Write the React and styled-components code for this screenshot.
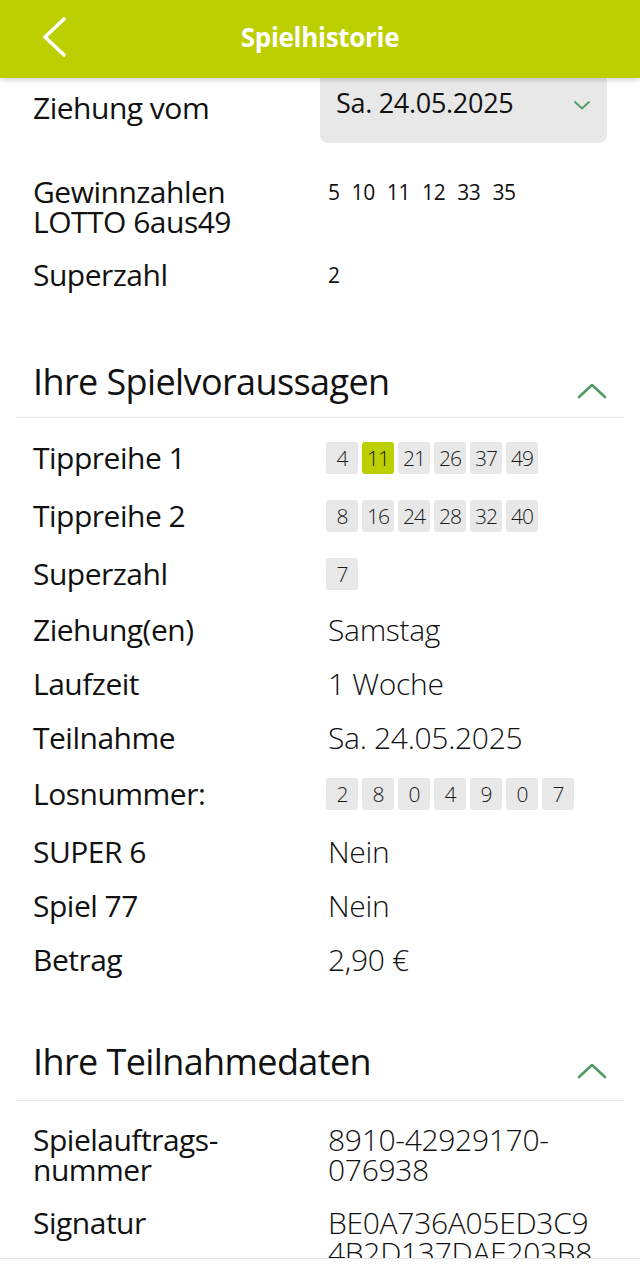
import React from "react";
import styled, { createGlobalStyle } from "styled-components";

const Global = createGlobalStyle`
  html, body { margin: 0; padding: 0; background: #fff; }
  body { font-family: "Open Sans", "Noto Sans", sans-serif; color: #111; }
  * { box-sizing: border-box; }
`;

const GREEN = "#bccf00";
const ICON_GREEN = "#4f9a66";

const Screen = styled.div`
  width: 640px;
  height: 1264px;
  display: flex;
  flex-direction: column;
  overflow: hidden;
  background: #fff;
`;

const Header = styled.header`
  position: relative;
  z-index: 2;
  flex: 0 0 78px;
  height: 78px;
  background: ${GREEN};
  display: grid;
  grid-template-columns: 96px 1fr 96px;
  align-items: center;
  box-shadow: 0 2px 5px rgba(0, 0, 0, 0.18);
`;

const BackButton = styled.button`
  border: 0;
  background: none;
  padding: 0 0 4px 40px;
  height: 78px;
  display: flex;
  align-items: center;
  cursor: pointer;
`;

const Title = styled.h1`
  margin: 0 0 4px;
  text-align: center;
  color: #fff;
  font-size: 26px;
  font-weight: 700;
  letter-spacing: -0.3px;
`;

const Scroll = styled.main`
  flex: 1;
  overflow: hidden;
  padding: 0 33px;
`;

const Footer = styled.div`
  flex: 0 0 6px;
  border-top: 1px solid #e4e4e4;
  background: #fff;
`;

const Row = styled.div`
  display: grid;
  grid-template-columns: 287px 1fr;
  margin-top: ${(p) => p.$mt ?? 22}px;
  min-height: ${(p) => p.$h ?? 32}px;
  align-items: center;
`;

const Label = styled.div`
  font-size: 30px;
  font-weight: 500;
  line-height: ${(p) => p.$lh ?? 32}px;
  letter-spacing: -0.5px;
  white-space: nowrap;
  align-self: ${(p) => (p.$top ? "start" : "center")};
  padding-top: ${(p) => p.$pt ?? 0}px;
`;

const Value = styled.div`
  padding-left: 8px;
  font-size: 30px;
  font-weight: 300;
  line-height: ${(p) => p.$lh ?? 32}px;
  letter-spacing: -0.3px;
  white-space: nowrap;
  align-self: ${(p) => (p.$top ? "start" : "center")};
`;

const Select = styled.div`
  height: 66px;
  margin-top: -2px;
  background: #e8e8e8;
  border-radius: 0 0 8px 8px;
  display: flex;
  align-items: flex-start;
  justify-content: space-between;
  padding: 10px 16px 0 16px;
  font-size: 27px;
  font-weight: 400;
  line-height: 32px;
  letter-spacing: -0.3px;
`;

const Winning = styled.div`
  padding-left: 8px;
  align-self: ${(p) => (p.$center ? "center" : "start")};
  display: flex;
  gap: 12px;
  font-size: 21px;
  font-weight: 500;
  line-height: 30px;
  letter-spacing: -0.4px;
`;

const ChipRow = styled.div`
  padding-left: 6px;
  display: flex;
  gap: 4px;
`;

const Chip = styled.span`
  width: 32px;
  height: 32px;
  border-radius: 3px;
  background: ${(p) => (p.$hit ? GREEN : "#e8e8e8")};
  display: flex;
  align-items: center;
  justify-content: center;
  font-size: 21px;
  font-weight: 300;
  letter-spacing: -1px;
  color: #1a1a1a;
`;

const SectionHead = styled.div`
  margin: ${(p) => p.$mt}px -17px 0;
  padding: 0 17px ${(p) => p.$pb ?? 15}px;
  border-bottom: 1px solid #e3e3e3;
  display: flex;
  justify-content: space-between;
  align-items: flex-end;
`;

const SectionTitle = styled.h2`
  margin: 0;
  font-size: 36px;
  font-weight: 400;
  line-height: 40px;
  letter-spacing: -0.6px;
`;

const ToggleIcon = styled.svg`
  margin-bottom: 2px;
`;

const ChevronDown = () => (
  <svg width="18" height="12" viewBox="0 0 18 12" style={{ marginTop: 12 }}>
    <polyline points="2,3 9,9.5 16,3" fill="none" stroke={ICON_GREEN} strokeWidth="1.8" strokeLinecap="round" strokeLinejoin="round" />
  </svg>
);

const ChevronUp = () => (
  <ToggleIcon width="30" height="18" viewBox="0 0 30 18">
    <polyline points="2,15 15,3 28,15" fill="none" stroke={ICON_GREEN} strokeWidth="2.6" strokeLinecap="round" strokeLinejoin="round" />
  </ToggleIcon>
);

const tips1 = [4, 11, 21, 26, 37, 49];
const tips2 = [8, 16, 24, 28, 32, 40];
const winning = [5, 10, 11, 12, 33, 35];
const los = [2, 8, 0, 4, 9, 0, 7];

export default function App() {
  return (
    <>
      <Global />
      <Screen>
        <Header>
          <BackButton aria-label="Zurück">
            <svg width="28" height="40" viewBox="0 0 28 40">
              <polyline points="24,2 5,20 24,38" fill="none" stroke="#fff" strokeWidth="3.6" strokeLinecap="round" strokeLinejoin="round" />
            </svg>
          </BackButton>
          <Title>Spielhistorie</Title>
          <span />
        </Header>
        <Scroll>
          <Row $mt={0} $h={66}>
            <Label $top $pt={14}>Ziehung vom</Label>
            <Select>
              <span>Sa. 24.05.2025</span>
              <ChevronDown />
            </Select>
          </Row>
          <Row $mt={33}>
            <Label $top $lh={30}>
              Gewinnzahlen
              <br />
              LOTTO 6aus49
            </Label>
            <Winning>
              {winning.map((n, i) => (
                <span key={i}>{n}</span>
              ))}
            </Winning>
          </Row>
          <Row>
            <Label>Superzahl</Label>
            <Winning $center>
              <span>2</span>
            </Winning>
          </Row>

          <SectionHead $mt={71}>
            <SectionTitle>Ihre Spielvoraussagen</SectionTitle>
            <ChevronUp />
          </SectionHead>
          <Row $mt={22} $h={36}>
            <Label>Tippreihe 1</Label>
            <ChipRow>
              {tips1.map((n) => (
                <Chip key={n} $hit={n === 11}>{n}</Chip>
              ))}
            </ChipRow>
          </Row>
          <Row $h={36}>
            <Label>Tippreihe 2</Label>
            <ChipRow>
              {tips2.map((n) => (
                <Chip key={n}>{n}</Chip>
              ))}
            </ChipRow>
          </Row>
          <Row $h={36}>
            <Label>Superzahl</Label>
            <ChipRow>
              <Chip>7</Chip>
            </ChipRow>
          </Row>
          <Row>
            <Label>Ziehung(en)</Label>
            <Value>Samstag</Value>
          </Row>
          <Row>
            <Label>Laufzeit</Label>
            <Value>1 Woche</Value>
          </Row>
          <Row>
            <Label>Teilnahme</Label>
            <Value>Sa. 24.05.2025</Value>
          </Row>
          <Row $h={34} $mt={23}>
            <Label>Losnummer:</Label>
            <ChipRow>
              {los.map((n, i) => (
                <Chip key={i}>{n}</Chip>
              ))}
            </ChipRow>
          </Row>
          <Row $mt={25}>
            <Label>SUPER 6</Label>
            <Value>Nein</Value>
          </Row>
          <Row>
            <Label>Spiel 77</Label>
            <Value>Nein</Value>
          </Row>
          <Row>
            <Label>Betrag</Label>
            <Value>2,90 €</Value>
          </Row>

          <SectionHead $mt={66} $pb={18}>
            <SectionTitle>Ihre Teilnahmedaten</SectionTitle>
            <ChevronUp />
          </SectionHead>
          <Row $mt={24}>
            <Label $top $lh={30}>
              Spielauftrags-
              <br />
              nummer
            </Label>
            <Value $top $lh={30}>
              8910-42929170-
              <br />
              076938
            </Value>
          </Row>
          <Row $mt={23}>
            <Label $top $lh={30}>Signatur</Label>
            <Value $top $lh={30}>
              BE0A736A05ED3C9
              <br />
              4B2D137DAE203B8
              <br />
              1F6C0E2A7B94D55
            </Value>
          </Row>
        </Scroll>
        <Footer />
      </Screen>
    </>
  );
}
